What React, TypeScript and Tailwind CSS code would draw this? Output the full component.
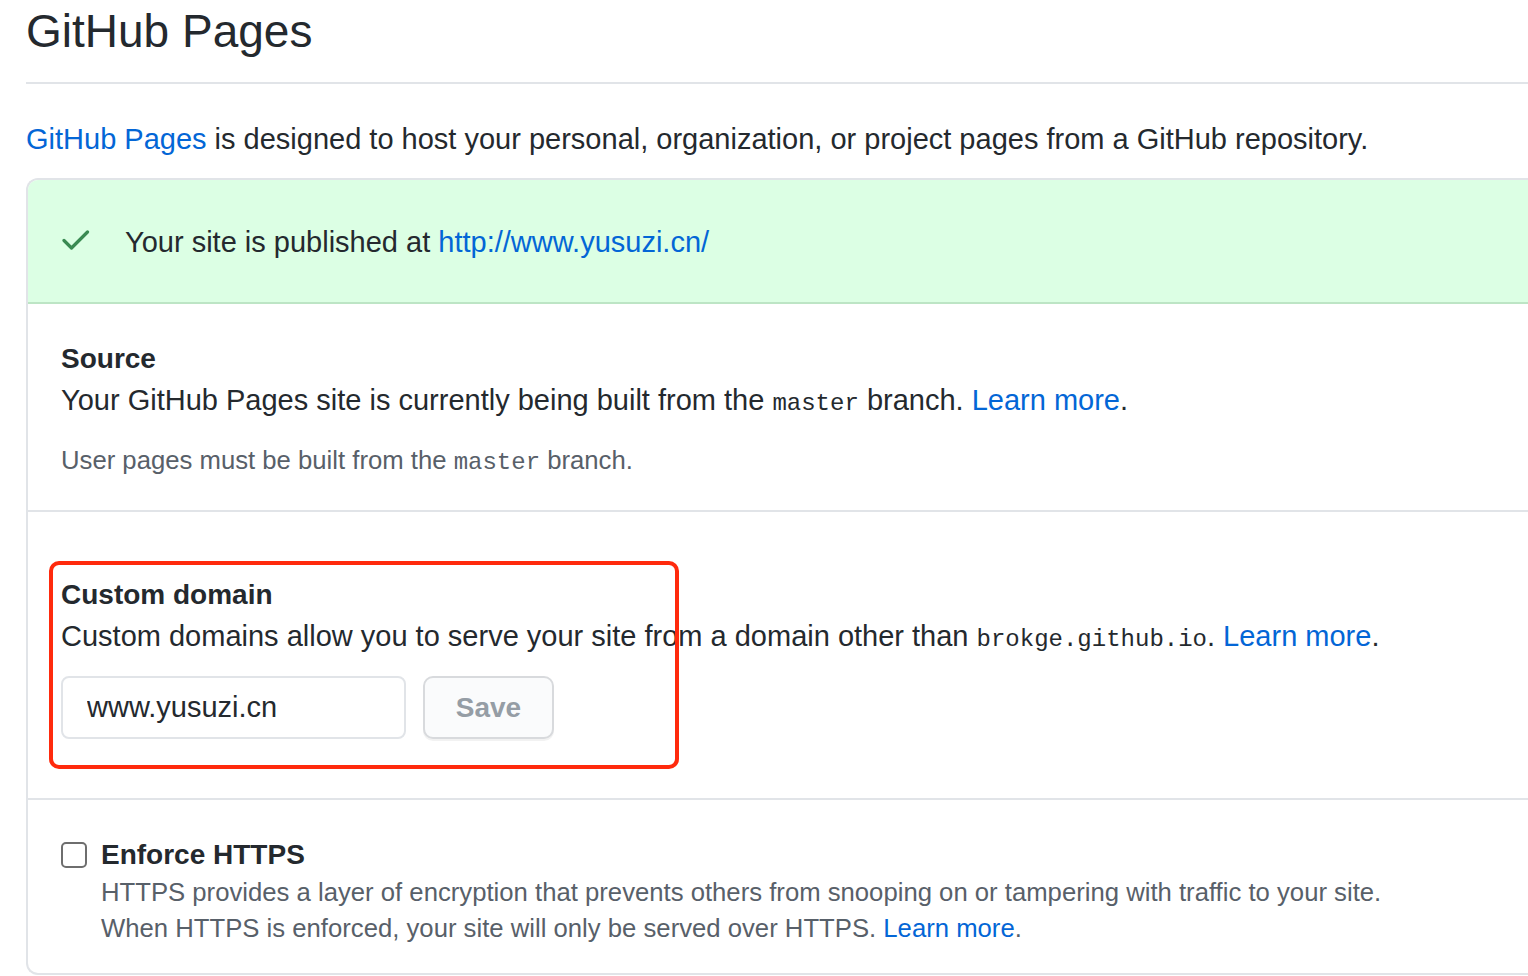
import { useState } from "react";

const CheckIcon = () => (
  <svg width="30" height="24" viewBox="0 0 30 24" fill="none" className="stroke-[#3a8a52]">
    <path d="M2 10.5l7.5 7.5L25.5 2" strokeWidth="3.2" strokeLinecap="round" strokeLinejoin="round" />
  </svg>
);

const Mono = ({ children }: { children: string }) => (
  <code className="font-['Liberation_Mono','DejaVu_Sans_Mono',monospace] text-[24px]">{children}</code>
);

const App = () => {
  const [domain, setDomain] = useState<string>("www.yusuzi.cn");
  const [enforce, setEnforce] = useState<boolean>(false);

  return (
    <div className="relative h-[976px] w-full overflow-hidden bg-white pl-[26px] font-['Liberation_Sans','Noto_Sans',sans-serif] text-[#24292e]">
      <div className="border-b-2 border-[#e1e4e8] pb-[22px]">
        <h2 className="pt-[2px] text-[46px] leading-[58px]">GitHub Pages</h2>
      </div>

      <p className="mt-[37px] text-[29px] leading-[36px]">
        <a className="text-[#0366d6]">GitHub Pages</a> is designed to host your personal, organization, or project pages from a GitHub repository.
      </p>

      <div className="mt-[21px] rounded-l-[12px] border-y-2 border-l-2 border-[#e1e4e8]">
        <div className="flex h-[124px] items-center rounded-tl-[10px] border-b-2 border-[#bde5c5] bg-[#dcffe4] pl-[34px] pt-[2px]">
          <CheckIcon />
          <span className="ml-[33px] text-[29px] leading-[36px]">
            Your site is published at <a className="text-[#0366d6]">http://www.yusuzi.cn/</a>
          </span>
        </div>

        <section className="border-b-2 border-[#e1e4e8] px-[33px] pb-[29px] pt-[36px]">
          <h3 className="text-[28px] font-bold leading-[38px]">Source</h3>
          <p className="mt-[4px] text-[29px] leading-[36px]">
            Your GitHub Pages site is currently being built from the <Mono>master</Mono> branch.{" "}
            <a className="text-[#0366d6]">Learn more</a>.
          </p>
          <p className="mt-[20px] text-[25.7px] leading-[36px] text-[#586069]">
            User pages must be built from the <Mono>master</Mono> branch.
          </p>
        </section>

        <section className="border-b-2 border-[#e1e4e8] px-[33px] pb-[59px] pt-[64px]">
          <h3 className="text-[28px] font-bold leading-[38px]">Custom domain</h3>
          <p className="mt-[4px] text-[29px] leading-[36px]">
            Custom domains allow you to serve your site from a domain other than <Mono>brokge.github.io</Mono>.{" "}
            <a className="text-[#0366d6]">Learn more</a>.
          </p>
          <div className="mt-[18px] flex gap-[17px]">
            <input
              value={domain}
              onChange={(e) => setDomain(e.target.value)}
              className="h-[63px] w-[345px] rounded-[8px] border-2 border-[#e1e4e8] px-[24px] text-[29px] text-[#24292e] outline-none"
            />
            <button className="h-[63px] w-[131px] rounded-[10px] border-2 border-[#d8dadd] bg-[#fafbfc] text-[28px] font-semibold text-[#959da5] shadow-[0_2px_0_rgba(27,31,35,0.06)]">
              Save
            </button>
          </div>
        </section>

        <section className="flex gap-[14px] px-[33px] pb-[27px] pt-[36px]">
          <button
            onClick={() => setEnforce(!enforce)}
            className={`mt-[6px] h-[26px] w-[26px] shrink-0 rounded-[5px] border-2 ${
              enforce ? "border-[#0366d6] bg-[#0366d6]" : "border-[#6e6e6e] bg-white"
            }`}
          />
          <div>
            <h3 className="text-[28px] font-bold leading-[38px]">Enforce HTTPS</h3>
            <p className="text-[25.7px] leading-[36px] text-[#586069]">
              HTTPS provides a layer of encryption that prevents others from snooping on or tampering with traffic to your site.
              <br />
              When HTTPS is enforced, your site will only be served over HTTPS. <a className="text-[#0366d6]">Learn more</a>.
            </p>
          </div>
        </section>
      </div>

      {/* red annotation box */}
      <div className="pointer-events-none absolute left-[49px] top-[561px] h-[208px] w-[630px] rounded-[10px] border-[4px] border-[#ff2a0d]" />
    </div>
  );
};

export default App;
